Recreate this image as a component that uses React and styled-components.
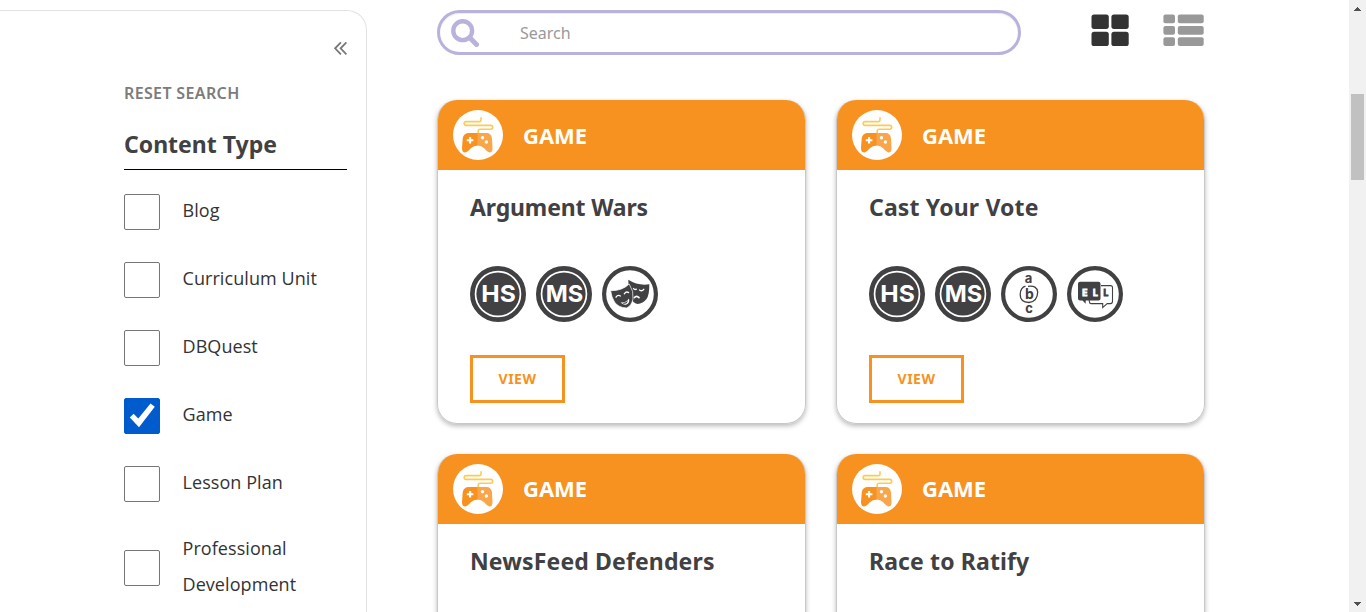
import React from "react";
import styled, { createGlobalStyle } from "styled-components";

const ORANGE = "#f79220";
const INK = "#414042";

const GlobalStyle = createGlobalStyle`
  * { box-sizing: border-box; }
  body {
    margin: 0;
    background: #fff;
    overflow: hidden;
    font-family: "Open Sans", "Noto Sans", sans-serif;
    color: #333;
  }
`;

const Page = styled.div`
  display: flex;
  width: 1366px;
  height: 612px;
  overflow: hidden;
`;

const Sidebar = styled.aside`
  flex: none;
  width: 367px;
  height: 720px;
  margin-top: 10px;
  padding: 30px 19px 0 124px;
  border: 1px solid #e2e2e2;
  border-left: 0;
  border-top-right-radius: 20px;
  display: flex;
  flex-direction: column;
`;

const CollapseRow = styled.div`
  display: flex;
  justify-content: flex-end;
  height: 15px;
`;

const ResetLink = styled.a`
  margin-top: 27px;
  font: 600 16px/20px "Noto Sans", sans-serif;
  letter-spacing: 0.36px;
  color: #7c7c7c;
  white-space: nowrap;
`;

const GroupTitle = styled.h3`
  margin: 22px 0 0;
  height: 45px;
  border-bottom: 1px solid #000;
  font: 700 23px/38px "Noto Sans", sans-serif;
  color: ${INK};
  white-space: nowrap;
`;

const OptionList = styled.ul`
  list-style: none;
  margin: 22px 0 0;
  padding: 0;
  display: flex;
  flex-direction: column;
  gap: 28px;
`;

const Option = styled.li`
  display: flex;
  align-items: center;
  gap: 22.5px;
  min-height: 40px;
`;

const Checkbox = styled.span`
  flex: none;
  display: flex;
  width: 36px;
  height: 36px;
  border: 1px solid ${(p) => (p.$checked ? "#005ccc" : "#767676")};
  border-radius: 2px;
  background: ${(p) => (p.$checked ? "#005ccc" : "#fff")};
`;

const OptionLabel = styled.span`
  min-height: 39px;
  margin-top: -2px;
  padding-bottom: 1px;
  font-size: 18px;
  line-height: 36px;
  letter-spacing: 0.07px;
`;

const Main = styled.main`
  flex: none;
  width: 768px;
  margin-left: 70px;
  padding-top: 10px;
`;

const Toolbar = styled.div`
  display: flex;
  align-items: flex-start;
  height: 45px;
`;

const SearchBox = styled.div`
  display: flex;
  align-items: center;
  width: 584px;
  height: 45px;
  padding-left: 11px;
  border: 3px solid #b8b3dc;
  border-radius: 23px;
  box-shadow: inset 0 1px 1px rgba(0, 0, 0, 0.08);
`;

const Placeholder = styled.span`
  margin-left: 41px;
  font: 16px/22px "Noto Sans", sans-serif;
  color: #999;
`;

const ViewSwitch = styled.div`
  display: flex;
  justify-content: space-between;
  width: 113px;
  margin: 4px 0 0 70px;
`;

const CardGrid = styled.div`
  display: grid;
  grid-template-columns: 369px 369px;
  column-gap: 30px;
  row-gap: 29.6px;
  margin-top: 45px;
`;

const Card = styled.article`
  height: 324px;
  border: 1px solid #c8c8c8;
  border-top: 0;
  border-radius: 20px;
  box-shadow: 0 2px 5px rgba(0, 0, 0, 0.28);
  overflow: hidden;
`;

const CardHeader = styled.header`
  display: flex;
  align-items: center;
  gap: 20px;
  height: 70px;
  padding-left: 15px;
  background: ${ORANGE};
  color: #fff;
  font: 700 22px/30px "Open Sans", sans-serif;
`;

const CardLabel = styled.span`
  padding-bottom: 1px;
`;

const CardBody = styled.div`
  padding: 20px 32px 0;
`;

const CardTitle = styled.h2`
  margin: 0;
  font: 700 23px/34px "Noto Sans", sans-serif;
  letter-spacing: ${(p) => p.$tracking}px;
  color: ${INK};
`;

const BadgeRow = styled.div`
  display: flex;
  gap: 10px;
  height: 56px;
  margin-top: 42px;
`;

const ViewButton = styled.a`
  display: flex;
  align-items: center;
  justify-content: center;
  width: 95px;
  height: 48px;
  margin-top: 33px;
  border: 3px solid ${ORANGE};
  font: 700 14px/20px "Noto Sans", sans-serif;
  letter-spacing: 0.5px;
  color: ${ORANGE};
`;

const ScrollTrack = styled.div`
  display: flex;
  flex-direction: column;
  align-items: center;
  justify-content: space-between;
  width: 17px;
  margin-left: auto;
  background: #f1f1f1;
`;

const ScrollThumb = styled.div`
  width: 13px;
  height: 86px;
  margin: 77px 0 auto;
  background: #c1c1c1;
`;

const ScrollArrow = ({ down }) => (
  <svg width="17" height="17" viewBox="0 0 17 17" fill="#505050" shapeRendering="crispEdges">
    <path d={down ? "M5 7h7v1h-1v1h-1v1H9v1H8v-1H7V9H6V8H5z" : "M8 7h1v1h1v1h1v1h1v1H5v-1h1V9h1V8h1z"} />
  </svg>
);

const CheckMark = () => (
  <svg width="34" height="34" viewBox="0 0 34 34">
    <path d="M4.8 18.4 8.6 14.8 13.3 19.6 25.5 4.6 29.8 7.8 14 28.2z" fill="#fff" />
  </svg>
);

const CollapseIcon = () => (
  <svg width="14" height="15" viewBox="0 0 14 15" fill="none" stroke="#777" strokeWidth="1.8">
    <path d="M7.900 1.400 2.100 7.300 7.900 13.300M13.400 1.400 7.600 7.300 13.400 13.300" />
  </svg>
);

const SearchIcon = () => (
  <svg width="28" height="28" viewBox="0 0 28 28" fill="none" stroke="#b8b3dc">
    <circle cx="11.7" cy="11.7" r="9.4" strokeWidth="4.4" />
    <path d="M18.8 18.8 25.5 25.5" strokeWidth="5" strokeLinecap="round" />
  </svg>
);

const GridIcon = () => (
  <svg width="38" height="33" viewBox="0 0 38 33" fill="#333">
    <rect x="0.5" y="0.5" width="17.3" height="14.4" rx="2.6" />
    <rect x="20.4" y="0.5" width="17.3" height="14.4" rx="2.6" />
    <rect x="0.5" y="17.8" width="17.3" height="14.2" rx="2.6" />
    <rect x="20.4" y="17.8" width="17.3" height="14.2" rx="2.6" />
  </svg>
);

const ListIcon = () => (
  <svg width="41" height="33" viewBox="0 0 41 33" fill="#999">
    {[0.5, 12, 23.3].map((y) => (
      <React.Fragment key={y}>
        <rect x="0.4" y={y} width="11.6" height="8.8" rx="2" />
        <rect x="14.8" y={y} width="25.9" height="8.8" rx="2" />
      </React.Fragment>
    ))}
  </svg>
);

const GameIcon = () => (
  <svg width="50" height="50" viewBox="0 0 50 50">
    <circle cx="25" cy="25" r="25" fill="#fff" />
    <path
      d="M28 7.3v2.600q0 1.700-1.600 1.700H13q-1.800 0-1.800 1.900T13 15.400h24.700q2 0 2 1.900t-2 1.900H27q-1.800 0-1.800 1.800V24"
      fill="none"
      stroke="#fbcb55"
      strokeWidth="1.600"
    />
    <path d="M25 23H16Q10.500 23 9.700 28.500L9 38Q9 42.600 12.300 42.500 14.500 42 17.800 38.200 20.500 35.500 25 35.500z" fill={ORANGE} />
    <path d="M24.500 23H33.500Q38.300 23 39 28.500L39.500 38Q39.500 42.600 36.500 42.500 34.500 42 31.200 38.200 28.500 35.500 24.500 35.500z" fill="#f9a54a" />
    <path d="M17.100 26.900v6.600M13.800 30.200h6.600" stroke="#fff" strokeWidth="2.100" />
    <circle cx="29.500" cy="27.800" r="1.700" fill="#fff" />
    <circle cx="33.400" cy="32" r="1.700" fill="#fff" />
  </svg>
);

const BadgeFrame = styled.svg`
  flex: none;
  width: 56px;
  height: 56px;
  font-family: "Inter", "Open Sans", sans-serif;
  font-weight: 700;
  text-anchor: middle;
`;

const Ring = ({ thickness = 4.2, children }) => (
  <BadgeFrame viewBox="0 0 56 56">
    <circle cx="28" cy="28" r={28 - thickness / 2} fill="#fff" stroke={INK} strokeWidth={thickness} />
    {children}
  </BadgeFrame>
);

const LevelBadge = ({ text }) => (
  <Ring thickness={4.7}>
    <circle cx="28" cy="28" r="21.600" fill={INK} />
    <text
      x="28.500"
      y="36.300"
      fontSize="23.500"
      fill="#fff"
      textLength={text === "HS" ? 34.5 : 37.5}
      lengthAdjust="spacingAndGlyphs"
    >
      {text}
    </text>
  </Ring>
);

const MasksBadge = () => (
  <Ring>
    <path d="M26.300 13.800Q36 20 47.300 18.300 47.500 29 44.500 33 41 37.500 35.500 38 31 37 27 30z" fill={INK} />
    <path
      d="M8.600 24.700Q20 25 27.200 18 32 25 31 33 29.500 40 24.500 42 16 41.500 12.500 36 9.500 31 8.600 24.700z"
      fill={INK}
      stroke="#fff"
      strokeWidth="0.700"
    />
    <g fill="none" stroke="#fff" strokeWidth="1.300" strokeLinecap="round">
      <path d="M14 31.200q1.800-2.800 4.400-1.200M22.300 27.800q2-2.800 4.300-1.200M31.500 22.500q1 1.500 2.900.7M37.500 24q2.500 1.700 4.300-.7" />
      <path d="M32.500 31.500q2-2.500 4.500.2" strokeWidth="1.700" />
    </g>
    <path d="M18.500 36.300q5.500.700 8.500-3.800 1.200 5-3 6.200-3.500.500-5.500-2.400z" fill="#fff" />
    <path d="M20.400 36.900q3.500.300 5.600-2.300-.600 2.900-2.800 3.200-1.700.100-2.800-.900z" fill={INK} />
  </Ring>
);

const AbcBadge = () => (
  <Ring>
    <g fill={INK} fontSize="13">
      <text x="27.500" y="17.300">a</text>
      <text x="28.300" y="32.500" fontSize="14">b</text>
      <text x="28" y="46.500">c</text>
    </g>
    <path d="M27 20.300Q36 19 36.700 26 36.500 35.500 28 36.500 19 36 19.200 28.500 19.500 21.500 24.500 20.200" fill="none" stroke={INK} strokeWidth="1.300" />
  </Ring>
);

const EllBadge = () => (
  <Ring>
    <path
      d="M34 19.600h9.500q2 0 2 2v14q0 2-2 2h-3.300l-4.500 4v-4H24q-1.700 0-1.700-2v-3"
      fill="none"
      stroke={INK}
      strokeWidth="1.100"
    />
    <path d="M13 15.800h18.500q2 0 2 2v14.700q0 2-2 2H18.700v3.200l-3.200-3.200H13q-2 0-2-2V17.800q0-2 2-2z" fill={INK} />
    <g fontSize="8.500" stroke="#fff" strokeWidth="0.900" fill="#fff">
      <text x="17.800" y="29.800">E</text>
      <text x="28.500" y="29.800">L</text>
      <text x="39" y="29.800" fill={INK} stroke={INK}>L</text>
    </g>
  </Ring>
);

const badges = {
  hs: () => <LevelBadge text="HS" />,
  ms: () => <LevelBadge text="MS" />,
  drama: MasksBadge,
  abc: AbcBadge,
  ell: EllBadge,
};

const options = ["Blog", "Curriculum Unit", "DBQuest", "Game", "Lesson Plan", "Professional Development"];

const games = [
  { title: "Argument Wars", tracking: -0.15, tags: ["hs", "ms", "drama"] },
  { title: "Cast Your Vote", tracking: 0.15, tags: ["hs", "ms", "abc", "ell"] },
  { title: "NewsFeed Defenders", tracking: 0.14, tags: [] },
  { title: "Race to Ratify", tracking: 0.13, tags: [] },
];

const GameCard = ({ title, tracking, tags }) => (
  <Card>
    <CardHeader>
      <GameIcon />
      <CardLabel>GAME</CardLabel>
    </CardHeader>
    <CardBody>
      <CardTitle $tracking={tracking}>{title}</CardTitle>
      <BadgeRow>
        {tags.map((tag) => {
          const Badge = badges[tag];
          return <Badge key={tag} />;
        })}
      </BadgeRow>
      {tags.length > 0 && <ViewButton>VIEW</ViewButton>}
    </CardBody>
  </Card>
);

export default function App() {
  return (
    <Page>
      <GlobalStyle />
      <Sidebar>
        <CollapseRow>
          <CollapseIcon />
        </CollapseRow>
        <ResetLink>RESET SEARCH</ResetLink>
        <GroupTitle>Content Type</GroupTitle>
        <OptionList>
          {options.map((name) => (
            <Option key={name}>
              <Checkbox $checked={name === "Game"}>{name === "Game" && <CheckMark />}</Checkbox>
              <OptionLabel>{name}</OptionLabel>
            </Option>
          ))}
        </OptionList>
      </Sidebar>
      <Main>
        <Toolbar>
          <SearchBox>
            <SearchIcon />
            <Placeholder>Search</Placeholder>
          </SearchBox>
          <ViewSwitch>
            <GridIcon />
            <ListIcon />
          </ViewSwitch>
        </Toolbar>
        <CardGrid>
          {games.map((game) => (
            <GameCard key={game.title} {...game} />
          ))}
        </CardGrid>
      </Main>
      <ScrollTrack>
        <ScrollArrow />
        <ScrollThumb />
        <ScrollArrow down />
      </ScrollTrack>
    </Page>
  );
}
